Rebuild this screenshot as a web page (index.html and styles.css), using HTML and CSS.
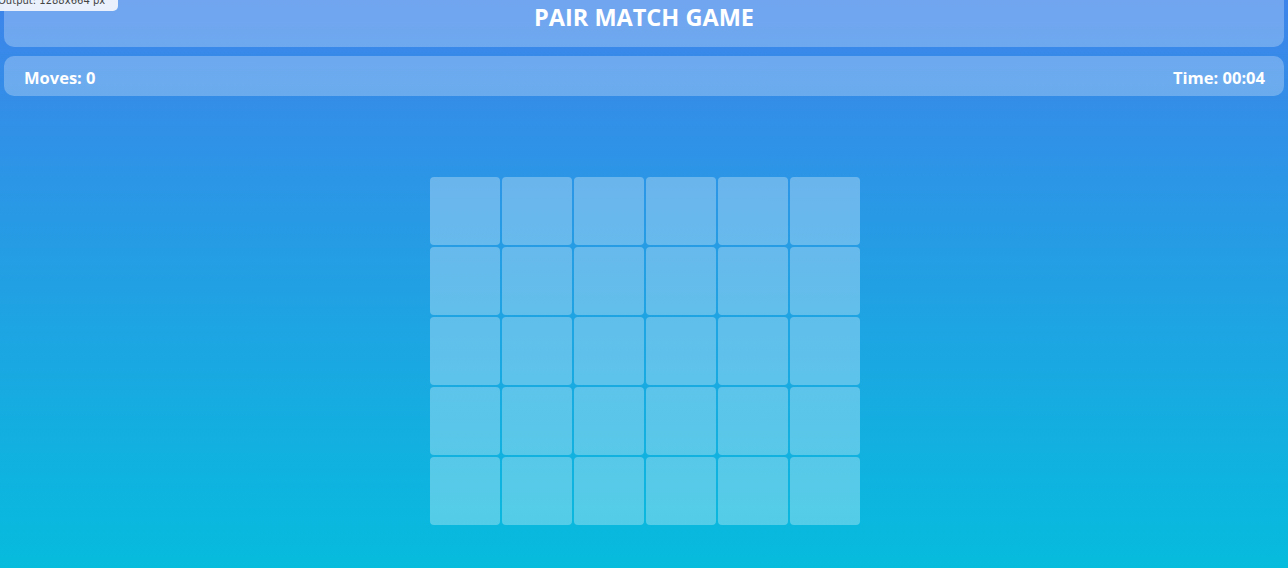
FILE: index.html
```html
<!DOCTYPE html>
<html lang="en">
<head>
<meta charset="utf-8">
<title>Pair Match Game</title>
<link rel="stylesheet" href="styles.css">
</head>
<body>
<div class="badge">Output: 1288x664 px</div>
<header class="header"><h1 class="title">PAIR MATCH GAME</h1></header>
<div class="stats">
  <span class="stat">Moves: 0</span>
  <span class="stat">Time: 00:04</span>
</div>
<main class="board">
  <div class="grid">
    <div class="card"></div><div class="card"></div><div class="card"></div><div class="card"></div><div class="card"></div><div class="card"></div>
    <div class="card"></div><div class="card"></div><div class="card"></div><div class="card"></div><div class="card"></div><div class="card"></div>
    <div class="card"></div><div class="card"></div><div class="card"></div><div class="card"></div><div class="card"></div><div class="card"></div>
    <div class="card"></div><div class="card"></div><div class="card"></div><div class="card"></div><div class="card"></div><div class="card"></div>
    <div class="card"></div><div class="card"></div><div class="card"></div><div class="card"></div><div class="card"></div><div class="card"></div>
  </div>
</main>
</body>
</html>
```
FILE: styles.css
```css
html, body {
  margin: 0;
  padding: 0;
}
html {
  background: linear-gradient(180deg, #3d84ea 0%, #06bcdd 100%);
  min-height: 100%;
}
body {
  min-height: 568px;
  font-family: "Open Sans", "Noto Sans", "Liberation Sans", sans-serif;
  color: #fff;
  padding: 0 4px;
  box-sizing: border-box;
  position: relative;
}
.badge {
  position: absolute;
  top: -8px;
  left: 0;
  width: 118px;
  height: 19px;
  box-sizing: border-box;
  padding: 3px 0 0 0;
  background: rgba(240, 244, 252, 0.95);
  border-radius: 0 0 5px 0;
  color: #444;
  font-family: "DejaVu Sans", sans-serif;
  font-size: 10px;
  line-height: 12px;
  white-space: nowrap;
  overflow: hidden;
  text-indent: -2px;
  z-index: 2;
}
.header {
  height: 47px;
  background: rgba(255, 255, 255, 0.27);
  border-radius: 0 0 10px 10px;
  display: flex;
  justify-content: center;
}
.title {
  margin: 3px 0 0;
  font-size: 23.5px;
  line-height: 28px;
  font-weight: 700;
}
.stats {
  margin-top: 9px;
  height: 40px;
  box-sizing: border-box;
  padding: 2px 19px 0 20px;
  background: rgba(255, 255, 255, 0.27);
  border-radius: 10px;
  display: flex;
  align-items: center;
  justify-content: space-between;
}
.stat {
  font-size: 16.5px;
  font-weight: 700;
}
.board {
  display: flex;
  justify-content: center;
  padding: 81px 0 0 2px;
}
.grid {
  display: grid;
  grid-template-columns: repeat(6, 70px);
  grid-auto-rows: 68px;
  gap: 2px;
}
.card {
  background: rgba(255, 255, 255, 0.3);
  border-radius: 4px;
}
```
